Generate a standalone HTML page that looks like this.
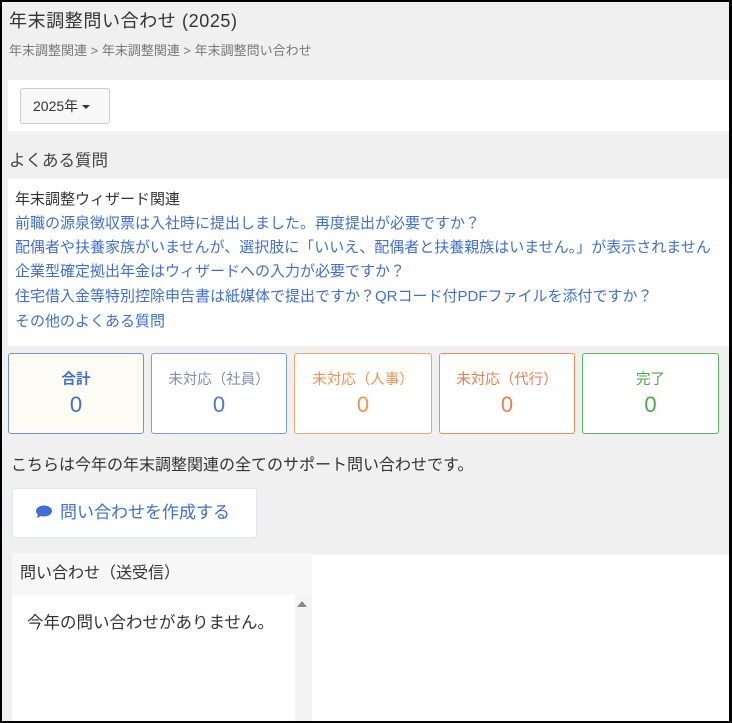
<!DOCTYPE html>
<html><head><meta charset="utf-8"><style>
*{margin:0;padding:0;box-sizing:border-box}
html,body{width:732px;height:723px;overflow:hidden}
body{background:#f0f0f0;font-family:"Liberation Sans","Noto Sans CJK JP",sans-serif;color:#333;position:relative}
.a{position:absolute;white-space:nowrap}
.frame{position:absolute;left:0;top:0;width:732px;height:723px;border:2px solid #000;border-right:3px solid #000;pointer-events:none;z-index:10}
.link{color:#3f6fd6;font-size:15px}
.card{position:absolute;top:353px;height:81px;border:1px solid;border-radius:3px;background:#fff;text-align:center}
.card .t{font-size:14.5px;margin-top:17px;line-height:18px}
.card .n{font-size:22px;margin-top:3px;line-height:26px}
</style></head><body>
<div class="a" style="left:9px;top:7px;font-size:18px;letter-spacing:0.6px;color:#333">年末調整問い合わせ (2025)</div>
<div class="a" style="left:9px;top:40px;font-size:13px;color:#777">年末調整関連 &gt; 年末調整関連 &gt; 年末調整問い合わせ</div>
<div class="a" style="left:8px;top:80px;width:721px;height:51px;background:#fff"></div>
<div class="a" style="left:20px;top:88px;width:90px;height:36px;border:1px solid #ccc;border-radius:3px;background:#f8f8f8;font-size:14px;line-height:34px;padding-left:12px;color:#333">2025年 <span style="display:inline-block;width:0;height:0;border-left:4px solid transparent;border-right:4px solid transparent;border-top:4px solid #333;vertical-align:middle"></span></div>
<div class="a" style="left:9px;top:147px;font-size:16.5px;color:#444">よくある質問</div>
<div class="a" style="left:8px;top:179px;width:721px;height:167px;background:#fff"></div>
<div class="a" style="left:15px;top:188px;font-size:15px;color:#333">年末調整ウィザード関連</div>
<div class="a link" style="left:15px;top:212px">前職の源泉徴収票は入社時に提出しました。再度提出が必要ですか？</div>
<div class="a link" style="left:15px;top:236px">配偶者や扶養家族がいませんが、選択肢に「いいえ、配偶者と扶養親族はいません。」が表示されません</div>
<div class="a link" style="left:15px;top:260px">企業型確定拠出年金はウィザードへの入力が必要ですか？</div>
<div class="a link" style="left:15px;top:285px">住宅借入金等特別控除申告書は紙媒体で提出ですか？QRコード付PDFファイルを添付ですか？</div>
<div class="a link" style="left:15px;top:310px">その他のよくある質問</div>
<div class="card" style="left:8px;width:136px;border-color:#6f93de;background:#fcfcf5;color:#3f6fd6"><div class="t" style="font-weight:bold">合計</div><div class="n">0</div></div>
<div class="card" style="left:151px;width:136px;border-color:#7f9de0;color:#7f8fb5"><div class="t">未対応（社員）</div><div class="n" style="color:#4f77d6">0</div></div>
<div class="card" style="left:294px;width:138px;border-color:#f5a56a;color:#f5924f"><div class="t">未対応（人事）</div><div class="n">0</div></div>
<div class="card" style="left:439px;width:136px;border-color:#f08c5a;color:#ef7d4f"><div class="t">未対応（代行）</div><div class="n">0</div></div>
<div class="card" style="left:582px;width:137px;border-color:#5cb85c;color:#4aa84a"><div class="t">完了</div><div class="n">0</div></div>
<div class="a" style="left:11px;top:451px;font-size:16px;color:#333">こちらは今年の年末調整関連の全てのサポート問い合わせです。</div>
<div class="a" style="left:12px;top:488px;width:245px;height:50px;background:#fff;border:1px solid #dde6f5;border-radius:3px;font-size:17px;color:#3f6fd6;line-height:48px;padding-left:23px">
<svg width="16" height="14" viewBox="0 0 16 14" style="vertical-align:-1px;margin-right:8px"><ellipse cx="8" cy="6" rx="8" ry="5.5" fill="#3f6fd6"/><path d="M2 9 L1 13 L6 10.5Z" fill="#3f6fd6"/></svg>問い合わせを作成する</div>
<div class="a" style="left:312px;top:555px;width:420px;height:168px;background:#fff"></div>
<div class="a" style="left:12px;top:553px;width:300px;height:42px;background:#f7f7f7;font-size:16px;color:#333;line-height:42px;padding-left:8px">問い合わせ（送受信）</div>
<div class="a" style="left:12px;top:595px;width:283px;height:128px;background:#fff"></div>
<div class="a" style="left:295px;top:595px;width:17px;height:128px;background:#f4f4f4"></div>
<div class="a" style="left:297px;top:601px;width:0;height:0;border-left:5px solid transparent;border-right:5px solid transparent;border-bottom:6px solid #888"></div>
<div class="a" style="left:27px;top:609px;font-size:16.5px;color:#333">今年の問い合わせがありません。</div>
<div class="frame"></div>
</body></html>
